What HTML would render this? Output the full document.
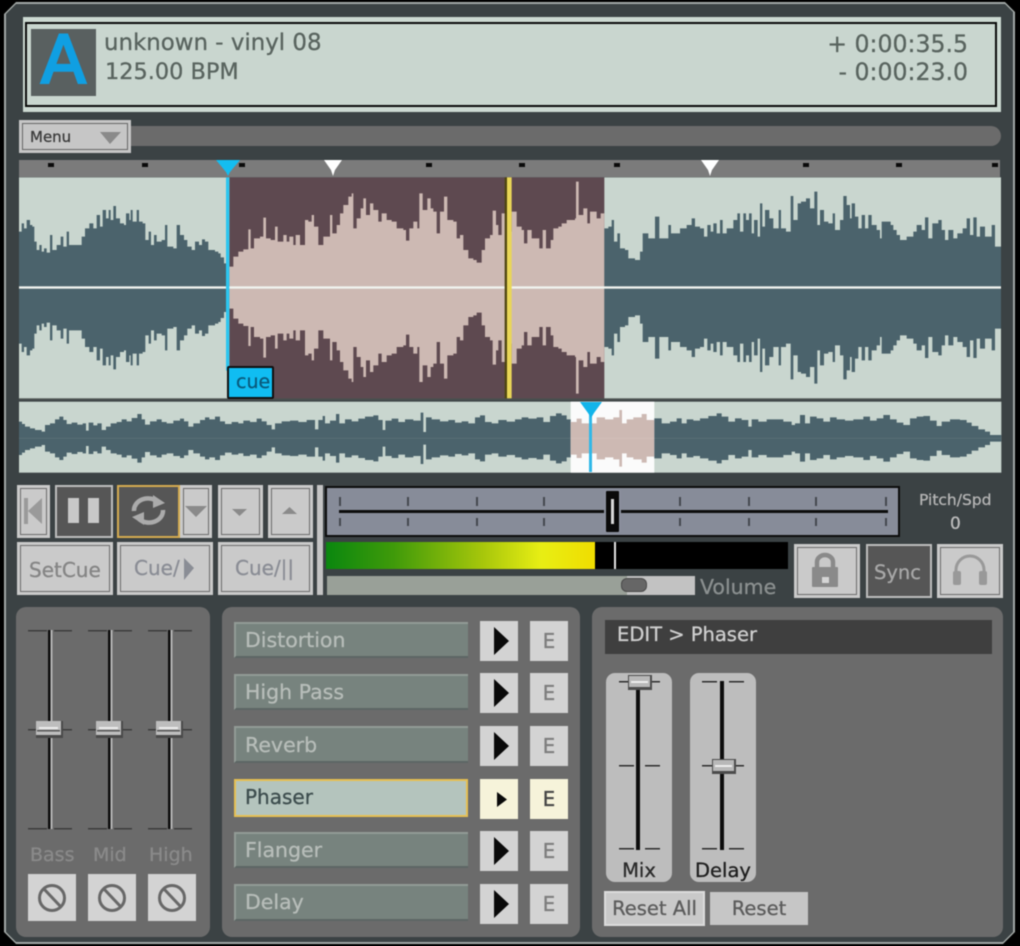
<!DOCTYPE html>
<html><head><meta charset="utf-8"><title>Deck</title>
<style>
html,body{margin:0;padding:0;background:#000;width:1020px;height:946px;overflow:hidden}
#r{position:relative;width:1020px;height:946px;background:#000;overflow:hidden;filter:blur(.55px);font-family:"DejaVu Sans",sans-serif}
#r div{position:absolute;box-sizing:border-box}
.t{white-space:nowrap;line-height:30px;height:30px;-webkit-text-stroke:.3px currentColor}
.c{text-align:center}
.b{background:#cacaca;box-shadow:inset 0 0 0 3px #cacaca,inset 0 0 0 4px #6c6c6c}
.k{background:#565656;box-shadow:inset 0 0 0 2px #bdbdbd}
.p{background:#6b6b6b;border-radius:10px}
.n{left:234px;width:234px;background:#77837e;border-top:2px solid #929b96;border-left:2px solid #929b96;border-bottom:2px solid #5d6664}
.f{background:#d3d3d3}
svg{position:absolute;left:0;top:0;overflow:visible}
</style></head><body>
<div id="r">
<div style="left:4px;top:2px;width:1011px;height:942px;background:#a2a8a6;clip-path:polygon(12px 0,calc(100% - 10px) 0,100% 10px,100% calc(100% - 12px),calc(100% - 12px) 100%,12px 100%,0 calc(100% - 12px),0 12px)"></div>
<div style="left:6px;top:4px;width:1007px;height:938px;background:#3b4244;clip-path:polygon(10px 0,calc(100% - 8px) 0,100% 8px,100% calc(100% - 10px),calc(100% - 10px) 100%,10px 100%,0 calc(100% - 10px),0 10px)"></div>

<!-- header -->
<div style="left:23px;top:17px;width:978px;height:95px;background:#ccd9d2"></div>
<div style="left:25px;top:22px;width:972px;height:85px;background:#c9d6cf;border:2px solid #0a0a0a"></div>
<div style="left:31px;top:29px;width:65px;height:67px;background:#596060"></div>
<div class="c" style="left:31px;top:28px;width:65px;height:66px;line-height:66px;font-size:66px;color:#109fe2;-webkit-text-stroke:2.5px #109fe2">A</div>
<div class="t" style="left:104px;top:28px;font-size:22.9px;color:#59645f">unknown - vinyl 08</div>
<div class="t" style="left:105px;top:57px;font-size:22.4px;color:#59645f">125.00 BPM</div>
<div class="t" style="right:52px;top:29px;font-size:23.6px;color:#59645f">+ 0:00:35.5</div>
<div class="t" style="right:52px;top:57px;font-size:23.6px;color:#59645f">- 0:00:23.0</div>

<!-- menu / scroll -->
<div style="left:120px;top:126px;width:881px;height:20px;background:#6b6b6b;border-radius:0 10px 10px 0"></div>
<div class="b" style="left:19px;top:120px;width:112px;height:33px;background:#c6c6c6;box-shadow:inset 0 0 0 3px #c6c6c6,inset 0 0 0 4px #666"></div>
<div class="t" style="left:30px;top:122px;font-size:15px;color:#3c3c3c">Menu</div>

<!-- ruler -->
<div style="left:19px;top:160px;width:981px;height:17px;background:#7b7b7b"></div>

<!-- main waveform -->
<svg width="1020" height="235" viewBox="0 0 3060 705" style="top:170px">
<rect x="57" y="22" width="2946" height="666" fill="#c9d6cf"/>
<rect x="688" y="22" width="1125" height="666" fill="#5e4950"/>
<g id="wA"><path fill="#4b636c" d="M57 353V185H65V160H72V175H80V150H90V165H97V170H103V215H110V240H118V225H125V245H132V235H140V248H150V195H157V240H170V225H182V200H190V230H200V185H207V225H230V225H245V200H255V175H268V160H280V175H290V135H300V170H308V120H318V145H326V120H332V150H340V108H348V145H360V160H372V165H378V130H388V150H392V120H398V155H410V120H417V155H428V160H436V210H446V185H453V225H462V195H470V215H485V210H495V165H502V230H520V235H530V165H540V195H552V210H562V230H575V240H585V215H597V225H606V208H615V215H625V240H645V245H655V250H662V262H672V280H680V290H688V353Z"/>
<path fill="#cdb9b3" d="M688 353V290H700V260H715V245H730V238H745V178H752V235H762V205H780V200H790V143H798V205H812V210H825V170H833V215H850V195H860V215H868V200H880V225H887V195H900V225H915V150H925V155H935V135H942V170H955V225H970V200H990V135H997V190H1010V165H1020V130H1030V105H1045V80H1055V70H1060V175H1070V145H1082V115H1090V85H1098V135H1110V100H1120V120H1135V155H1145V130H1160V150H1175V155H1190V175H1210V180H1218V212H1228V175H1240V155H1252V175H1258V70H1268V120H1282V85H1292V115H1300V125H1310V190H1320V125H1332V80H1342V150H1360V155H1370V205H1380V195H1390V240H1405V265H1420V270H1430V278H1445V240H1455V205H1470V195H1478V122H1488V165H1495V195H1505V130H1515V185H1535V125H1550V170H1565V180H1572V220H1582V180H1595V205H1610V205H1618V235H1628V180H1638V235H1652V210H1660V175H1675V170H1685V160H1700V150H1725V145H1728V35H1736V135H1750V115H1762V160H1770V125H1790V145H1802V130H1813V353Z"/>
<path fill="#4b636c" d="M1813 353V175H1825V170H1835V150H1842V215H1852V190H1860V235H1875V240H1885V265H1905V270H1920V245H1928V190H1945V205H1965V140H1978V205H2005V165H2013V190H2040V175H2060V165H2075V145H2085V170H2100V175H2112V200H2122V165H2132V185H2140V160H2150V190H2160V150H2168V190H2180V175H2200V150H2212V130H2220V185H2230V130H2238V150H2247V130H2255V190H2262V150H2273V200H2280V100H2287V170H2295V120H2308V145H2320V175H2336V120H2343V175H2358V185H2372V78H2380V150H2393V100H2403V95H2418V85H2430V115H2443V65H2452V165H2460V120H2472V155H2485V160H2498V130H2505V180H2520V150H2530V78H2540V105H2550V145H2555V100H2565V140H2575V175H2585V135H2595V175H2605V135H2615V165H2630V180H2640V205H2645V155H2672V165H2680V180H2690V195H2700V210H2720V200H2740V185H2750V165H2765V180H2775V142H2785V205H2797V160H2815V150H2825V180H2835V210H2845V180H2860V205H2872V190H2888V175H2900V145H2910V195H2920V142H2930V200H2940V170H2955V200H2975V165H2985V230H3003V353Z"/></g>
<use href="#wA" transform="matrix(1 0 0 -1 0 706)"/>
<rect x="57" y="349" width="2946" height="7" fill="#f0f3ef"/>
<rect x="1514" y="22" width="7" height="666" fill="#4f4610"/>
<rect x="1521" y="22" width="14" height="666" fill="#e9d657"/>
<rect x="678" y="22" width="10" height="580" fill="#2cc6f0"/>
<rect x="57" y="685" width="2946" height="6" fill="#4a504f"/>
</svg>

<!-- overview -->
<svg width="1020" height="120" viewBox="0 0 3060 360" style="top:360px">
<rect x="57" y="125" width="2947" height="213" fill="#c9d6cf"/>
<rect x="1712" y="125" width="251" height="213" fill="#fbfbfb"/>
<g id="wB"><path fill="#4b636c" d="M57 235V185H66V192H75V200H90V205H105V210H125V215H135V195H150V190H165V178H178V170H190V180H200V192H215V188H232V194H248V190H258V212H266V188H280V196H292V190H305V210H318V200H332V190H350V186H365V178H380V184H395V174H412V162H425V178H435V194H450V184H470V178H485V186H500V190H520V182H540V176H552V184H565V200H580V190H600V180H615V172H628V178H645V170H660V184H675V192H695V186H715V190H730V182H750V186H770V176H785V184H800V195H815V208H825V190H845V184H870V182H895V186H920V180H945V208H955V180H968V168H975V190H990V182H1008V162H1018V190H1035V178H1055V184H1075V176H1095V170H1120V166H1135V180H1148V210H1156V182H1175V176H1195V186H1215V178H1240V182H1262V158H1270V216H1278V172H1295V178H1320V184H1345V180H1365V188H1385V184H1405V190H1425V172H1440V166H1455V186H1475V190H1495V180H1520V185H1545V178H1565V172H1585V176H1610V172H1630V186H1650V168H1668V160H1685V166H1700V178H1712V235Z"/>
<path fill="#cdb9b3" d="M1712 235V186H1730V176H1745V190H1790V172H1815V178H1840V172H1858V150H1866V190H1880V178H1900V172H1925V162H1940V180H1963V235Z"/>
<path fill="#4b636c" d="M1963 235V175H1985V190H2010V185H2030V175H2045V190H2060V178H2080V182H2100V175H2125V168H2150V160H2165V170H2185V185H2205V175H2225V180H2245V200H2255V178H2275V185H2300V178H2325V178H2350V185H2375V195H2385V190H2400V165H2415V190H2430V170H2450V175H2470V185H2490V172H2510V178H2535V182H2560V178H2590V170H2610V182H2630V175H2650V165H2670V178H2690V188H2710V195H2730V175H2750V170H2770V168H2790V182H2810V198H2825V185H2850V178H2880V180H2900V188H2915V198H2935V208H2955V215H2970V225H3004V235Z"/></g>
<use href="#wB" transform="matrix(1 0 0 -1 0 470)"/>
</svg>

<!-- cue box -->
<div style="left:227px;top:366px;width:47px;height:33px;background:#10bdf2;border:2px solid #101010;border-radius:2px"></div>
<div class="t" style="left:236px;top:367px;font-size:19px;color:#0a5a7c">cue</div>

<!-- transport -->
<div class="b" style="left:17px;top:485px;width:33px;height:53px"></div>
<div class="k" style="left:55px;top:485px;width:58px;height:53px"></div>
<div class="b" style="left:180px;top:485px;width:32px;height:53px"></div>
<div style="left:117px;top:485px;width:63px;height:53px;background:#565656;border:2.5px solid #d5ab50"></div>
<div class="b" style="left:218px;top:485px;width:45px;height:53px"></div>
<div class="b" style="left:268px;top:485px;width:45px;height:53px"></div>
<div class="b" style="left:17px;top:542px;width:96px;height:53px"></div>
<div class="b" style="left:117px;top:542px;width:96px;height:53px"></div>
<div class="b" style="left:218px;top:542px;width:95px;height:53px"></div>
<div class="t" style="left:29px;top:555px;font-size:20px;color:#858585">SetCue</div>
<div class="t" style="left:134px;top:553px;font-size:20px;color:#8a8d95">Cue/</div>
<div class="t" style="left:235px;top:553px;font-size:20px;color:#8a8d95">Cue/||</div>
<div style="left:317px;top:485px;width:6px;height:110px;background:#c4c4c4"></div>

<!-- pitch -->
<div style="left:325px;top:486px;width:575px;height:51px;background:#878c99;border:2px solid #0d0d0d"></div>

<!-- meter -->
<div style="left:326px;top:542px;width:462px;height:27px;background:#000"></div>
<div style="left:326px;top:542px;width:269px;height:27px;background:linear-gradient(90deg,#0a870f 0%,#3f9a0a 25%,#a6c60b 58%,#e8ee14 80%,#f0dd00 100%)"></div>
<div style="left:614px;top:542px;width:2px;height:27px;background:#e4e4e4"></div>

<!-- volume -->
<div style="left:327px;top:576px;width:368px;height:19px;background:#c2c2c2"></div>
<div style="left:327px;top:576px;width:300px;height:19px;background:#99a098"></div>
<div style="left:621px;top:578px;width:26px;height:14px;background:#666;border-radius:6px;border:1px solid #4a4a4a"></div>
<div class="t" style="left:700px;top:572px;font-size:20.5px;color:#8b9090">Volume</div>
<div class="t" style="left:919px;top:485px;font-size:15.5px;color:#b5b5b5">Pitch/Spd</div>
<div class="t" style="left:950px;top:509px;font-size:17px;color:#bdbdbd">0</div>
<div class="b" style="left:794px;top:544px;width:66px;height:54px"></div>
<div class="k" style="left:866px;top:544px;width:66px;height:54px"></div>
<div class="b" style="left:937px;top:544px;width:66px;height:54px"></div>
<div class="t" style="left:874px;top:558px;font-size:19.5px;color:#a8a8a8">Sync</div>

<!-- panels -->
<div class="p" style="left:16px;top:607px;width:194px;height:330px"></div>
<div class="p" style="left:222px;top:607px;width:358px;height:330px"></div>
<div class="p" style="left:592px;top:607px;width:411px;height:330px"></div>

<div class="t" style="left:30px;top:840px;font-size:19px;color:#8a8a8a">Bass</div>
<div class="t" style="left:93px;top:840px;font-size:19px;color:#8a8a8a">Mid</div>
<div class="t" style="left:149px;top:840px;font-size:19px;color:#8a8a8a">High</div>
<div class="f" style="left:28px;top:874px;width:48px;height:47px"></div>
<div class="f" style="left:88px;top:874px;width:48px;height:47px"></div>
<div class="f" style="left:148px;top:874px;width:48px;height:47px"></div>

<!-- effects -->
<div class="n" style="top:622px;height:36px"></div>
<div class="n" style="top:674px;height:36px"></div>
<div class="n" style="top:726px;height:37px"></div>
<div class="n" style="top:779px;height:38px;background:#b4c4bd;border:2.5px solid #e6bf52"></div>
<div class="n" style="top:832px;height:36px"></div>
<div class="n" style="top:884px;height:37px"></div>
<div class="t" style="left:245px;top:625px;font-size:20.5px;color:#b7bdb9">Distortion</div>
<div class="t" style="left:245px;top:677px;font-size:20.5px;color:#b7bdb9">High Pass</div>
<div class="t" style="left:245px;top:730px;font-size:20.5px;color:#b7bdb9">Reverb</div>
<div class="t" style="left:245px;top:782px;font-size:20px;color:#3d4d4e">Phaser</div>
<div class="t" style="left:245px;top:835px;font-size:20.5px;color:#b7bdb9">Flanger</div>
<div class="t" style="left:245px;top:887px;font-size:20.5px;color:#b7bdb9">Delay</div>

<div class="f" style="left:480px;top:621px;width:38px;height:40px"></div>
<div class="f" style="left:480px;top:673px;width:38px;height:40px"></div>
<div class="f" style="left:480px;top:726px;width:38px;height:40px"></div>
<div class="f" style="left:480px;top:779px;width:38px;height:40px;background:#f6f3da"></div>
<div class="f" style="left:480px;top:831px;width:38px;height:40px"></div>
<div class="f" style="left:480px;top:884px;width:38px;height:40px"></div>
<div class="f" style="left:530px;top:621px;width:38px;height:40px"></div>
<div class="f" style="left:530px;top:673px;width:38px;height:40px"></div>
<div class="f" style="left:530px;top:726px;width:38px;height:40px"></div>
<div class="f" style="left:530px;top:779px;width:38px;height:40px;background:#f6f3da"></div>
<div class="f" style="left:530px;top:831px;width:38px;height:40px"></div>
<div class="f" style="left:530px;top:884px;width:38px;height:40px"></div>
<div class="t c" style="left:530px;width:38px;top:626px;font-size:20px;color:#7d7d7d">E</div>
<div class="t c" style="left:530px;width:38px;top:678px;font-size:20px;color:#7d7d7d">E</div>
<div class="t c" style="left:530px;width:38px;top:731px;font-size:20px;color:#7d7d7d">E</div>
<div class="t c" style="left:530px;width:38px;top:784px;font-size:20px;color:#454545">E</div>
<div class="t c" style="left:530px;width:38px;top:836px;font-size:20px;color:#7d7d7d">E</div>
<div class="t c" style="left:530px;width:38px;top:889px;font-size:20px;color:#7d7d7d">E</div>

<!-- edit -->
<div style="left:605px;top:620px;width:387px;height:34px;background:#3f3f3f"></div>
<div class="t" style="left:617px;top:620px;font-size:19.5px;color:#cfcfcf">EDIT &gt; Phaser</div>
<div style="left:606px;top:673px;width:66px;height:209px;background:#bdbdbd;border-radius:9px"></div>
<div style="left:690px;top:673px;width:66px;height:209px;background:#bdbdbd;border-radius:9px"></div>
<div class="t c" style="left:606px;width:66px;top:856px;font-size:19.5px;color:#2a2a2a">Mix</div>
<div class="t c" style="left:684px;width:78px;top:856px;font-size:19.5px;color:#1f1f1f">Delay</div>
<div style="left:604px;top:891px;width:101px;height:35px;background:#c9c9c9;border:2px solid #dcdcdc"></div>
<div style="left:710px;top:892px;width:98px;height:33px;background:#c6c6c6"></div>
<div class="t c" style="left:604px;width:101px;top:894px;font-size:19.5px;color:#5c5c5c">Reset All</div>
<div class="t c" style="left:710px;width:98px;top:894px;font-size:19.5px;color:#5c5c5c">Reset</div>

<!-- shapes -->
<svg width="1020" height="946" viewBox="0 0 1020 946">
<!-- ruler marks -->
<g fill="#0a0a0a"><rect x="48" y="163" width="6" height="4"/><rect x="142" y="163" width="6" height="4"/><rect x="239" y="163" width="6" height="4"/><rect x="426" y="163" width="6" height="4"/><rect x="519" y="163" width="6" height="4"/><rect x="614" y="163" width="6" height="4"/><rect x="803" y="163" width="6" height="4"/><rect x="896" y="163" width="6" height="4"/><rect x="992" y="163" width="6" height="4"/></g>
<polygon points="216,160 240,160 230,172 228,176 226,172" fill="#14bdf0"/>
<polygon points="324,160 342,160 335,170 333,176 331,170" fill="#fff"/>
<polygon points="701,160 719,160 712,170 710,176 708,170" fill="#fff"/>
<!-- menu arrow -->
<polygon points="100,132 121,132 110,144" fill="#8a8a8a"/>
<!-- overview cue -->
<rect x="589" y="410" width="3" height="62" fill="#30b8e8"/>
<polygon points="580,402 602,402 594,413 591,418 588,413" fill="#12b4ea"/>
<!-- transport icons -->
<rect x="24" y="498" width="4" height="26" fill="#9a9a9a"/><polygon points="28,511 42,498 42,524" fill="#9a9a9a"/>
<rect x="68" y="498" width="11" height="25" fill="#c8c8c8"/><rect x="88" y="498" width="11" height="25" fill="#c8c8c8"/>
<g fill="none" stroke="#ababab" stroke-width="4.5"><path d="M134 511A14 12 0 0 1 158 502"/><path d="M163 510A14 12 0 0 1 139 519"/></g>
<polygon points="153,495 165,503 153,508" fill="#ababab"/><polygon points="144,512 132,517 144,525" fill="#ababab"/>
<polygon points="185,506 207,506 196,517" fill="#8a8a8a"/>
<polygon points="232,509 247,509 239.5,516" fill="#8a8a8a"/>
<polygon points="282,514 297,514 289.5,507" fill="#8a8a8a"/>
<polygon points="184,558 194,568 184,580" fill="#8a8d95"/>
<!-- pitch slider -->
<rect x="339" y="510" width="549" height="3" fill="#0d0d0d"/>
<g fill="#45484f"><rect x="339" y="497" width="2" height="9"/><rect x="407" y="497" width="2" height="9"/><rect x="476" y="497" width="2" height="9"/><rect x="543" y="497" width="2" height="9"/><rect x="679" y="497" width="2" height="9"/><rect x="748" y="497" width="2" height="9"/><rect x="815" y="497" width="2" height="9"/><rect x="885" y="497" width="2" height="9"/>
<rect x="339" y="518" width="2" height="8"/><rect x="407" y="518" width="2" height="8"/><rect x="476" y="518" width="2" height="8"/><rect x="543" y="518" width="2" height="8"/><rect x="679" y="518" width="2" height="8"/><rect x="748" y="518" width="2" height="8"/><rect x="815" y="518" width="2" height="8"/><rect x="885" y="518" width="2" height="8"/></g>
<rect x="604" y="490" width="17" height="42" fill="#8a8f9c"/>
<rect x="606" y="491" width="13" height="41" fill="#0a0a0a" rx="1"/><rect x="611" y="499" width="3" height="25" fill="#d8d8d8"/>
<!-- lock -->
<path d="M817 569V562A8 7 0 0 1 833 562V569" fill="none" stroke="#8a8a8a" stroke-width="4.5"/>
<rect x="812" y="567" width="26" height="20" fill="#8a8a8a" rx="1"/><rect x="822" y="577" width="7" height="6" fill="#d5d5d5"/>
<!-- headphones -->
<path d="M956 574V570A14 14 0 0 1 984 570V574" fill="none" stroke="#999" stroke-width="3"/>
<rect x="953" y="571" width="8" height="14" rx="2" fill="#999"/><rect x="979" y="571" width="8" height="14" rx="2" fill="#999"/>
<!-- EQ -->
<g id="eq">
<rect x="28" y="630" width="19" height="1.5" fill="#3d3d3d"/><rect x="54" y="630" width="18" height="1.5" fill="#3d3d3d"/>
<rect x="28" y="828" width="19" height="1.5" fill="#3d3d3d"/><rect x="54" y="828" width="18" height="1.5" fill="#3d3d3d"/>
<rect x="28" y="729" width="44" height="1.5" fill="#3d3d3d"/>
<rect x="48" y="630" width="2.5" height="199" fill="#0d0d0d"/><rect x="50.5" y="630" width="2" height="199" fill="#b5b5b5"/>
<rect x="36" y="721" width="27" height="17" fill="#4a4a4a"/><rect x="36" y="721" width="25" height="14" fill="#bdbdbd"/>
<rect x="39" y="727" width="19" height="2" fill="#ececec"/><rect x="37" y="730" width="23" height="1.5" fill="#555"/>
</g>
<use href="#eq" x="60"/><use href="#eq" x="120"/>
<g fill="none" stroke="#686868" stroke-width="3"><circle cx="52" cy="898" r="12.5"/><path d="M44 889L61 907"/><circle cx="112" cy="898" r="12.5"/><path d="M104 889L121 907"/><circle cx="172" cy="898" r="12.5"/><path d="M164 889L181 907"/></g>
<!-- play triangles -->
<g fill="#0a0a0a"><polygon points="494,627 509,641 494,655"/><polygon points="494,679 509,693 494,707"/><polygon points="494,732 509,746 494,760"/><polygon points="497,792 507,799.5 497,807"/><polygon points="494,837 509,851 494,865"/><polygon points="494,890 509,904 494,918"/></g>
<!-- edit sliders -->
<g fill="#2d2d2d">
<rect x="619" y="681" width="15" height="1.5"/><rect x="645" y="681" width="15" height="1.5"/><rect x="619" y="765" width="15" height="1.5"/><rect x="645" y="765" width="15" height="1.5"/><rect x="619" y="848" width="15" height="1.5"/><rect x="645" y="848" width="15" height="1.5"/>
<rect x="702" y="681" width="15" height="1.5"/><rect x="729" y="681" width="15" height="1.5"/><rect x="702" y="765" width="15" height="1.5"/><rect x="729" y="765" width="15" height="1.5"/><rect x="702" y="848" width="15" height="1.5"/><rect x="729" y="848" width="15" height="1.5"/>
</g>
<rect x="636" y="681" width="4" height="169" fill="#0d0d0d"/><rect x="720" y="681" width="4" height="169" fill="#0d0d0d"/>
<g id="h1"><rect x="628" y="675" width="24" height="15" fill="#4c4c4c"/><rect x="629" y="676" width="21" height="11" fill="#b8b8b8"/><rect x="631" y="681" width="17" height="2" fill="#ececec"/></g>
<use href="#h1" x="84" y="84"/>
</svg>
</div>
</body></html>
